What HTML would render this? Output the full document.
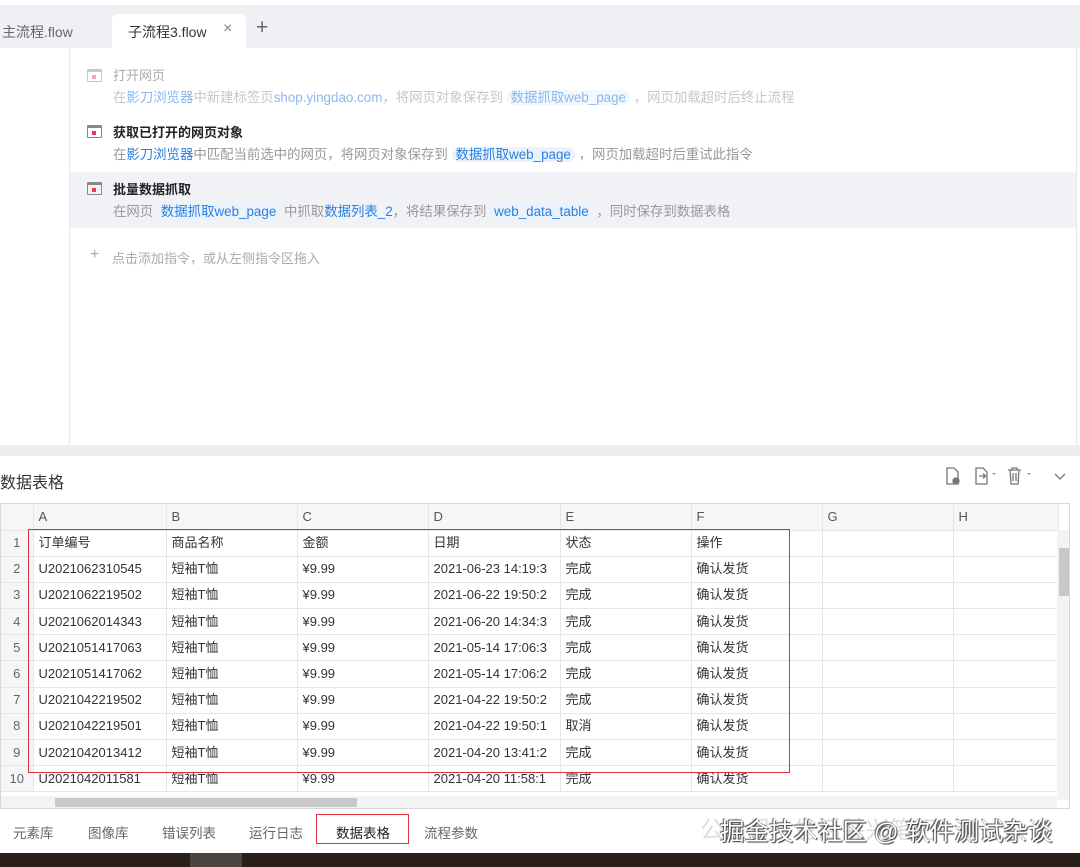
<!DOCTYPE html>
<html><head><meta charset="utf-8"><style>
*{margin:0;padding:0;box-sizing:border-box}
body{width:1080px;height:867px;overflow:hidden;background:#fff;font-family:"Liberation Sans","Noto Sans CJK SC",sans-serif;position:relative;color:#333}
.a{position:absolute;white-space:nowrap}
.tabbar{left:0;top:0;width:1080px;height:48px;background:#eef0f3}
.t1{font-size:14px;color:#666}
.ic{width:15px;height:13px;border:1.5px solid #888;border-top-width:3px;border-radius:1px;background:#fff}
.ic:after{content:"";position:absolute;left:4px;top:3px;width:4px;height:4px;background:#e35}
.ttl{font-size:13px;font-weight:bold;color:#222}
.desc{font-size:13.4px;color:#999}
.bl{color:#2a7fe0}
.chip{background:#eaf3fd;border-radius:8px;padding:0 4px;color:#2a7fe0}
.grid{left:0;top:503px;width:1070px;height:306px;border:1px solid #d8d8d8;background:#fff;overflow:hidden}
table{border-collapse:collapse;table-layout:fixed;font-size:13px;color:#333}
td{height:26.2px;border-right:1px solid #e6e6e6;border-bottom:1px solid #e6e6e6;padding-left:5px;overflow:hidden;white-space:nowrap;line-height:20px}
tr.h td{background:#f5f6f7;color:#555;height:26px}
td.rh{background:#f5f6f7;color:#666;text-align:center;padding:0}
.bt{font-size:13.5px;color:#666;top:822px}
</style></head><body>
<div class="a tabbar"></div>
<div class="a" style="left:0;top:0;width:1080px;height:5px;background:#fff"></div>
<div class="a t1" style="left:2px;top:22px">主流程.flow</div>
<div class="a" style="left:112px;top:14px;width:134px;height:36px;background:#fff;border-radius:6px 6px 0 0"></div>
<div class="a" style="left:128px;top:22px;font-size:14px;color:#333">子流程3.flow</div>
<div class="a" style="left:223px;top:20px;font-size:16px;color:#888">×</div>
<div class="a" style="left:256px;top:16px;font-size:21px;color:#666">+</div>
<div class="a" style="left:69px;top:48px;width:1px;height:398px;background:#e8e8e8"></div>
<div class="a" style="left:1076px;top:48px;width:1px;height:398px;background:#e8e8e8"></div>

<div class="a ic" style="left:87px;top:69px;opacity:.45"></div>
<div class="a ttl" style="left:113px;top:65px;color:#aaa;font-weight:normal">打开网页</div>
<div class="a desc" style="left:113px;top:86px;opacity:.55">在<span class="bl">影刀浏览器</span>中新建标签页<span class="bl">shop.yingdao.com</span>，将网页对象保存到 <span class="chip">数据抓取web_page</span> ，网页加载超时后终止流程</div>

<div class="a ic" style="left:87px;top:125px"></div>
<div class="a ttl" style="left:113px;top:122px">获取已打开的网页对象</div>
<div class="a desc" style="left:113px;top:143px">在<span class="bl">影刀浏览器</span>中匹配当前选中的网页，将网页对象保存到 <span class="chip">数据抓取web_page</span> ，网页加载超时后重试此指令</div>

<div class="a" style="left:70px;top:172px;width:1006px;height:56px;background:#f1f2f5"></div>
<div class="a ic" style="left:87px;top:182px;background:#f1f2f5"></div>
<div class="a ttl" style="left:113px;top:179px">批量数据抓取</div>
<div class="a desc" style="left:113px;top:200px">在网页 <span class="chip">数据抓取web_page</span> 中抓取<span class="bl">数据列表_2</span>，将结果保存到 <span class="chip">web_data_table</span> ，同时保存到数据表格</div>

<div class="a" style="left:90px;top:246px;font-size:16px;color:#aaa">+</div>
<div class="a" style="left:112px;top:248px;font-size:13px;color:#aaa">点击添加指令，或从左侧指令区拖入</div>

<div class="a" style="left:0;top:445px;width:1080px;height:11px;background:#eceef1"></div>
<div class="a" style="left:0;top:469px;font-size:16px;color:#333">数据表格</div>
<svg class="a" style="left:940px;top:464px" width="135" height="26" viewBox="0 0 135 26" fill="none" stroke="#777" stroke-width="1.3">
<path d="M7 4h7l4 4v12H7z"/><circle cx="16" cy="17" r="3" fill="#777"/>
<path d="M36 4h7l4 4v12H36zM39 12h6M43 9.5l2.5 2.5-2.5 2.5"/><path d="M52 9l2 2 2-2z" fill="#999" stroke="none"/>
<path d="M68 6h13M72 6V4h5v2M70 6l1 14h7l1-14M73 9v8M76 9v8"/><path d="M87 9l2 2 2-2z" fill="#999" stroke="none"/>
<path d="M115 10l5 5 5-5"/></svg>

<div class="a grid">
<table style="width:1057px">
<colgroup><col style="width:32px"><col style="width:133px"><col style="width:131px"><col style="width:131px"><col style="width:132px"><col style="width:131px"><col style="width:131px"><col style="width:131px"><col style="width:105px"></colgroup>
<tr class="h"><td class="rh"></td><td>A</td><td>B</td><td>C</td><td>D</td><td>E</td><td>F</td><td>G</td><td>H</td></tr>
<tr><td class="rh">1</td><td>订单编号</td><td>商品名称</td><td>金额</td><td>日期</td><td>状态</td><td>操作</td><td></td><td></td></tr>
<tr><td class="rh">2</td><td>U2021062310545</td><td>短袖T恤</td><td>¥9.99</td><td>2021-06-23 14:19:3</td><td>完成</td><td>确认发货</td><td></td><td></td></tr>
<tr><td class="rh">3</td><td>U2021062219502</td><td>短袖T恤</td><td>¥9.99</td><td>2021-06-22 19:50:2</td><td>完成</td><td>确认发货</td><td></td><td></td></tr>
<tr><td class="rh">4</td><td>U2021062014343</td><td>短袖T恤</td><td>¥9.99</td><td>2021-06-20 14:34:3</td><td>完成</td><td>确认发货</td><td></td><td></td></tr>
<tr><td class="rh">5</td><td>U2021051417063</td><td>短袖T恤</td><td>¥9.99</td><td>2021-05-14 17:06:3</td><td>完成</td><td>确认发货</td><td></td><td></td></tr>
<tr><td class="rh">6</td><td>U2021051417062</td><td>短袖T恤</td><td>¥9.99</td><td>2021-05-14 17:06:2</td><td>完成</td><td>确认发货</td><td></td><td></td></tr>
<tr><td class="rh">7</td><td>U2021042219502</td><td>短袖T恤</td><td>¥9.99</td><td>2021-04-22 19:50:2</td><td>完成</td><td>确认发货</td><td></td><td></td></tr>
<tr><td class="rh">8</td><td>U2021042219501</td><td>短袖T恤</td><td>¥9.99</td><td>2021-04-22 19:50:1</td><td>取消</td><td>确认发货</td><td></td><td></td></tr>
<tr><td class="rh">9</td><td>U2021042013412</td><td>短袖T恤</td><td>¥9.99</td><td>2021-04-20 13:41:2</td><td>完成</td><td>确认发货</td><td></td><td></td></tr>
<tr><td class="rh">10</td><td>U2021042011581</td><td>短袖T恤</td><td>¥9.99</td><td>2021-04-20 11:58:1</td><td>完成</td><td>确认发货</td><td></td><td></td></tr>
</table>
<div class="a" style="left:1056px;top:26px;width:13px;height:270px;background:#f3f3f3"></div>
<div class="a" style="left:1058px;top:44px;width:10px;height:48px;background:#c8c8c8"></div>
<div class="a" style="left:0;top:292px;width:1056px;height:13px;background:#f3f3f3"></div>
<div class="a" style="left:54px;top:294px;width:302px;height:9px;background:#c8c8c8"></div>
</div>

<div class="a" style="left:28px;top:529px;width:762px;height:244px;border:1.5px solid #e0303a"></div>

<div class="a bt" style="left:13px">元素库</div>
<div class="a bt" style="left:88px">图像库</div>
<div class="a bt" style="left:162px">错误列表</div>
<div class="a bt" style="left:249px">运行日志</div>
<div class="a" style="left:316px;top:814px;width:93px;height:30px;border:1.5px solid #e0303a"></div>
<div class="a bt" style="left:336px;color:#222">数据表格</div>
<div class="a bt" style="left:424px">流程参数</div>
<div class="a" style="left:700px;top:810px;font-size:24px;color:#ddd">公众号 · 生活并兴笔记</div>
<div class="a" style="left:720px;top:813px;font-size:24.5px;color:#fff;text-shadow:1px 1px 1px #333,-1px -1px 1px #555">掘金技术社区 @ 软件测试杂谈</div>
<div class="a" style="left:0;top:853px;width:1080px;height:14px;background:#2b2019"></div>
<div class="a" style="left:190px;top:853px;width:52px;height:14px;background:#4a4440"></div>
</body></html>
